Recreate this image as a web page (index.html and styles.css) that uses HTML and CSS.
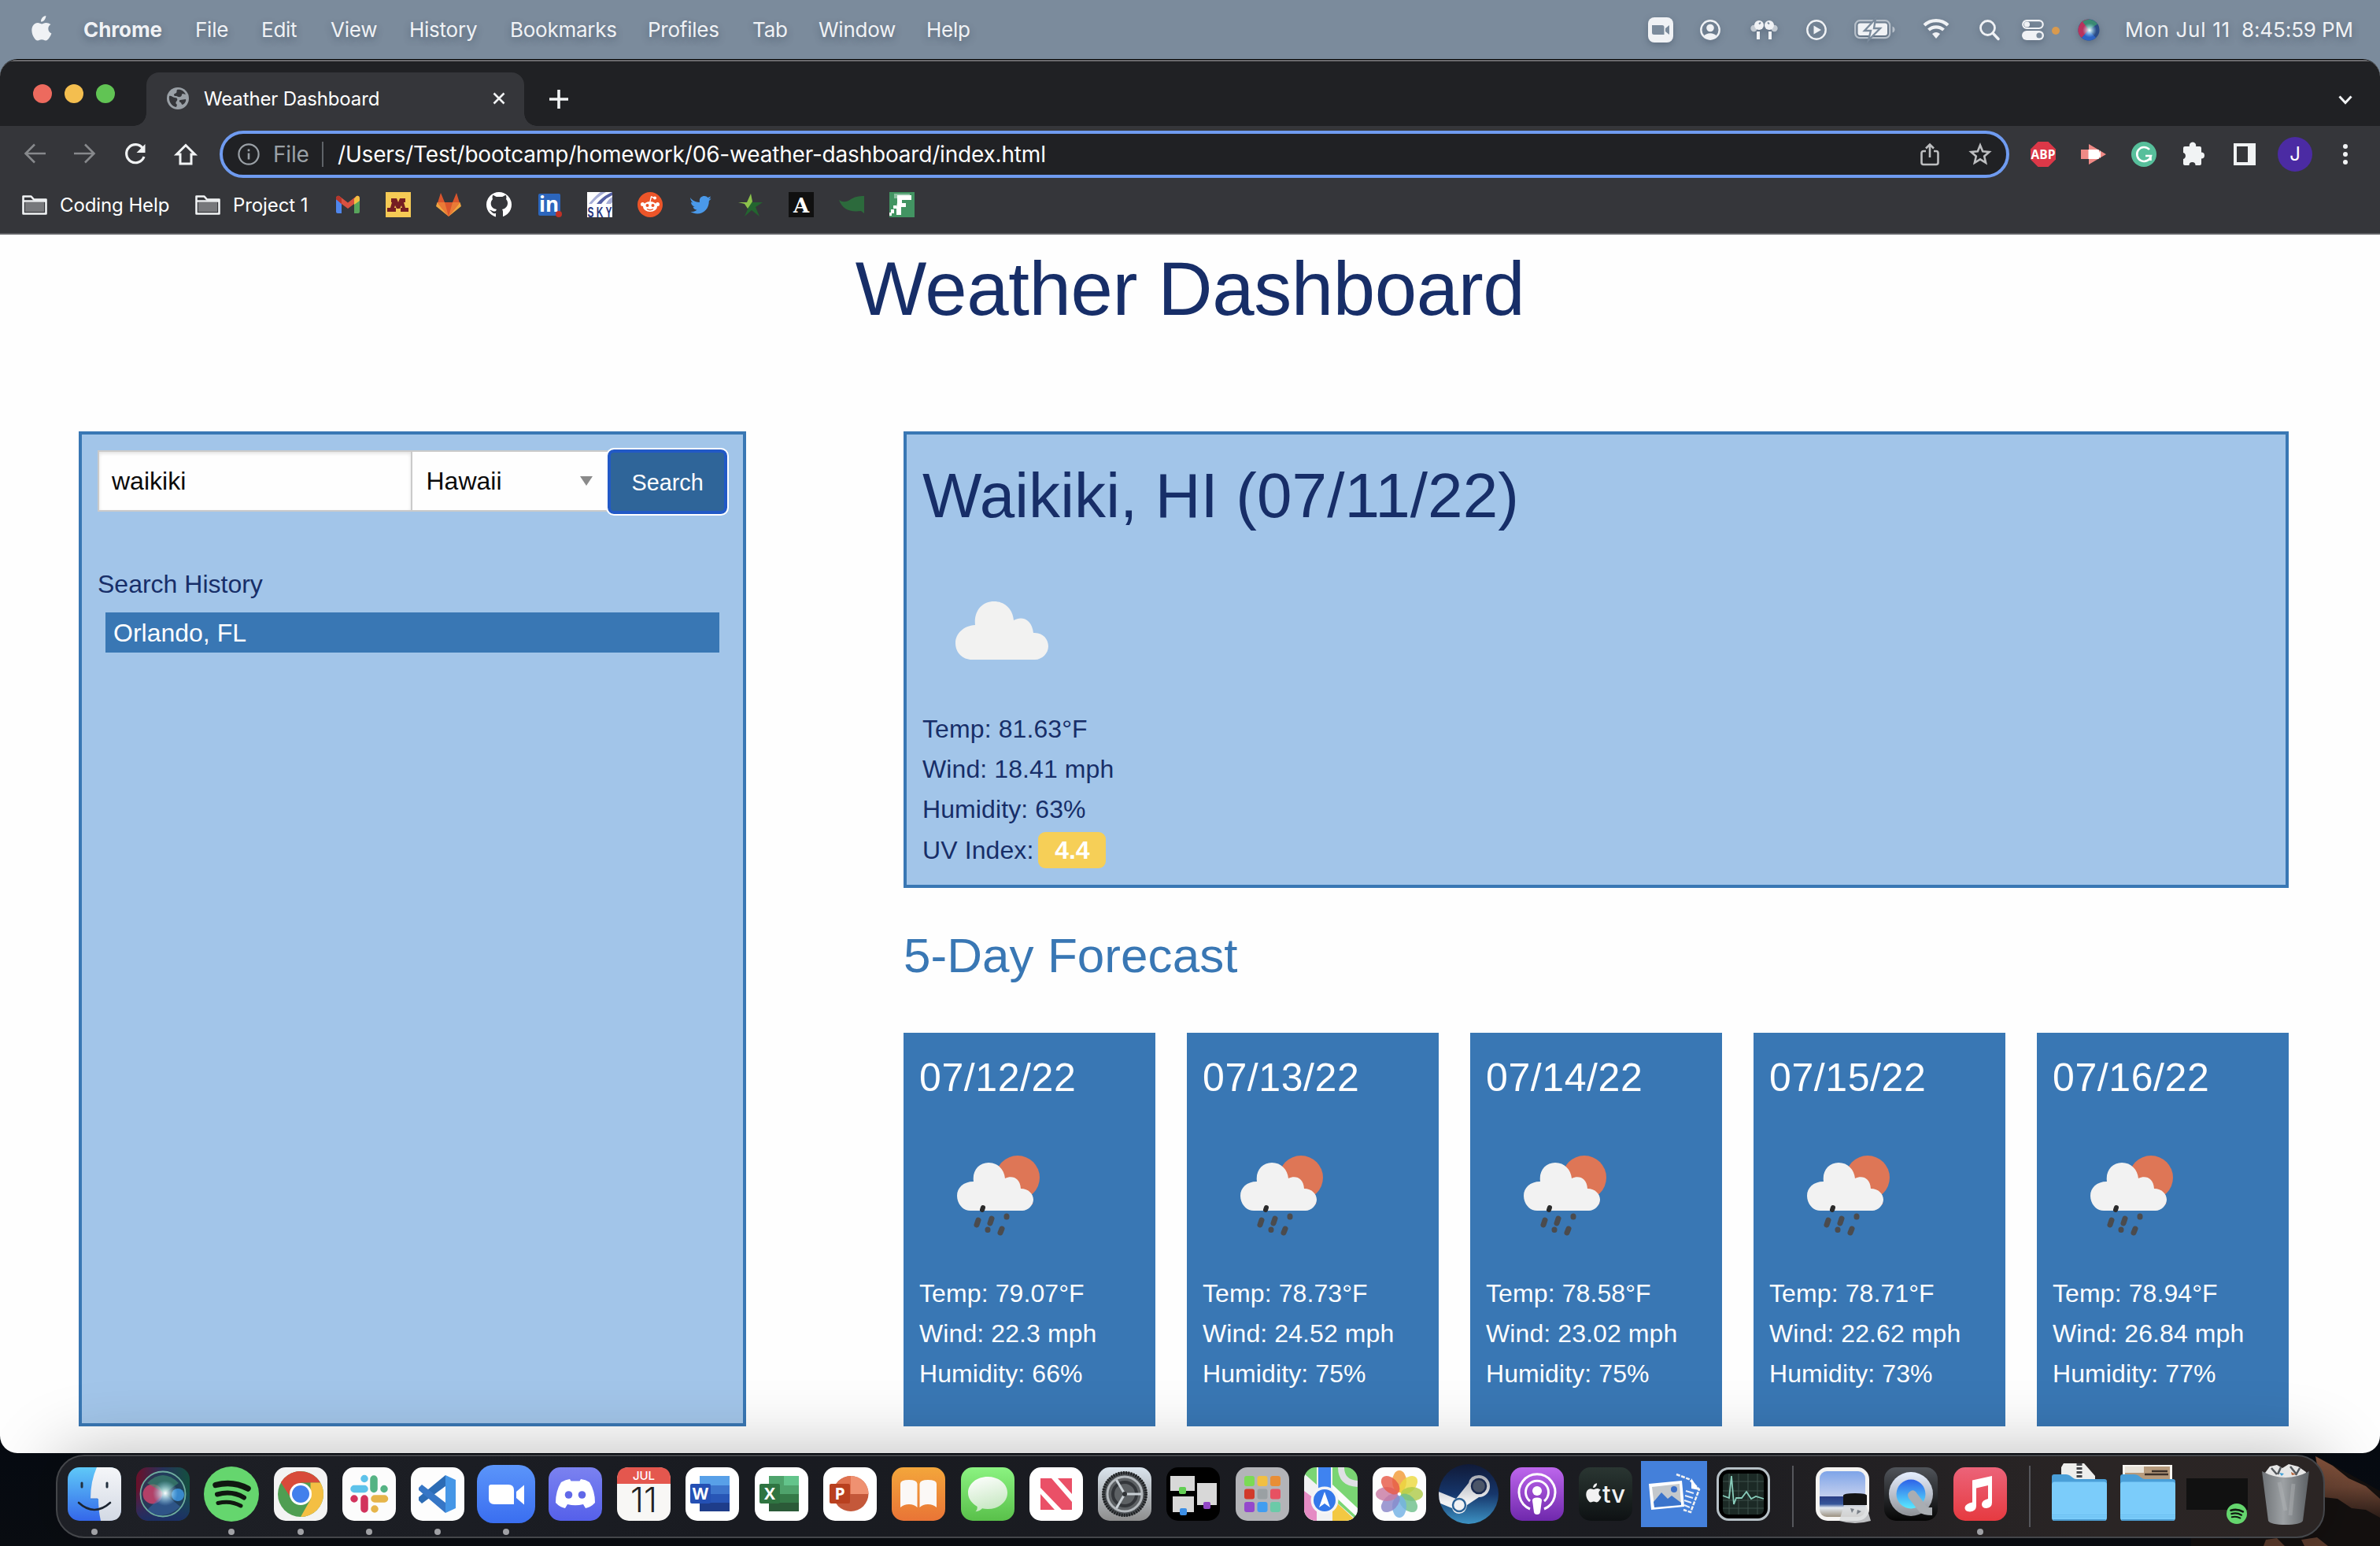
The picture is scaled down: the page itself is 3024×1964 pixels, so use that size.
FILE: index.html
```html
<!DOCTYPE html>
<html lang="en">
<head>
<meta charset="utf-8">
<title>Weather Dashboard</title>
<link rel="stylesheet" href="styles.css">
</head>
<body>
<svg width="0" height="0" class="defs" aria-hidden="true">
  <defs>
    <linearGradient id="g-finder" x1="0" y1="0" x2="0" y2="1"><stop offset="0" stop-color="#5fc9f8"/><stop offset="1" stop-color="#3467ea"/></linearGradient>
    <linearGradient id="g-face" x1="0" y1="0" x2="0" y2="1"><stop offset="0" stop-color="#f5f6f9"/><stop offset="1" stop-color="#d3d9e4"/></linearGradient>
    <linearGradient id="g-zoom" x1="0" y1="0" x2="0" y2="1"><stop offset="0" stop-color="#5b95fa"/><stop offset="1" stop-color="#3a6ef0"/></linearGradient>
    <linearGradient id="g-discord" x1="0" y1="0" x2="0" y2="1"><stop offset="0" stop-color="#7b82f0"/><stop offset="1" stop-color="#5560ea"/></linearGradient>
    <linearGradient id="g-books" x1="0" y1="0" x2="0" y2="1"><stop offset="0" stop-color="#f3a63b"/><stop offset="1" stop-color="#e97436"/></linearGradient>
    <linearGradient id="g-msg" x1="0" y1="0" x2="0" y2="1"><stop offset="0" stop-color="#8bf381"/><stop offset="1" stop-color="#59c04a"/></linearGradient>
    <linearGradient id="g-bubble" x1="0" y1="0" x2=".3" y2="1"><stop offset="0" stop-color="#fff"/><stop offset="1" stop-color="#c9e8c4"/></linearGradient>
    <linearGradient id="g-pref" x1="0" y1="0" x2="0" y2="1"><stop offset="0" stop-color="#dbe5ee"/><stop offset="1" stop-color="#8d8d8d"/></linearGradient>
    <linearGradient id="g-steam" x1="0" y1="0" x2="0" y2="1"><stop offset="0" stop-color="#101a38"/><stop offset=".5" stop-color="#16366b"/><stop offset="1" stop-color="#3d93c4"/></linearGradient>
    <linearGradient id="g-arm" x1="0" y1="0" x2="0" y2="1"><stop offset="0" stop-color="#a8abb2"/><stop offset=".7" stop-color="#f2f2f4"/></linearGradient>
    <linearGradient id="g-pod" x1="0" y1="0" x2="0" y2="1"><stop offset="0" stop-color="#bd66ec"/><stop offset="1" stop-color="#6f28ac"/></linearGradient>
    <linearGradient id="g-tv" x1="0" y1="0" x2="0" y2="1"><stop offset="0" stop-color="#2a3632"/><stop offset="1" stop-color="#0e1113"/></linearGradient>
    <linearGradient id="g-music" x1="0" y1="0" x2="0" y2="1"><stop offset="0" stop-color="#ec6379"/><stop offset="1" stop-color="#e63a40"/></linearGradient>
    <linearGradient id="g-qt" x1="0" y1="0" x2="0" y2="1"><stop offset="0" stop-color="#50545a"/><stop offset="1" stop-color="#050505"/></linearGradient>
    <linearGradient id="g-ring" x1="0" y1="0" x2="0" y2="1"><stop offset="0" stop-color="#e6efff"/><stop offset="1" stop-color="#8e9196"/></linearGradient>
    <linearGradient id="g-lens" x1="0" y1="0" x2="0" y2="1"><stop offset="0" stop-color="#2e62e8"/><stop offset="1" stop-color="#59eaff"/></linearGradient>
    <linearGradient id="g-sky" x1="0" y1="0" x2="0" y2="1"><stop offset="0" stop-color="#7ea4e8"/><stop offset=".55" stop-color="#c3cfee"/><stop offset=".56" stop-color="#2b3f86"/><stop offset=".72" stop-color="#35569a"/><stop offset=".8" stop-color="#e4ebf2"/><stop offset="1" stop-color="#9c9180"/></linearGradient>
    <linearGradient id="g-bin" x1="0" y1="0" x2="1" y2="0"><stop offset="0" stop-color="#6f7377"/><stop offset=".45" stop-color="#9da1a4"/><stop offset="1" stop-color="#5c6064"/></linearGradient>
    <linearGradient id="g-siri" x1="0" y1="0" x2="1" y2="0"><stop offset="0" stop-color="#6b1029"/><stop offset=".5" stop-color="#26315c"/><stop offset="1" stop-color="#14503f"/></linearGradient>
    <linearGradient id="g-siri-low" x1="0" y1="0" x2="0" y2="1"><stop offset=".4" stop-color="#1d3b78" stop-opacity="0"/><stop offset="1" stop-color="#1c2f63"/></linearGradient>
    <radialGradient id="g-flare"><stop offset="0" stop-color="#fff"/><stop offset=".3" stop-color="#dff" stop-opacity=".7"/><stop offset="1" stop-color="#9df" stop-opacity="0"/></radialGradient>
    <linearGradient id="g-rock" x1="0" y1="0" x2="0" y2="1"><stop offset="0" stop-color="#8a573f"/><stop offset=".5" stop-color="#6b4433"/><stop offset="1" stop-color="#2b1d18"/></linearGradient>
    <symbol id="spotify" viewBox="0 0 70 70"><circle cx="35" cy="35" r="35" fill="#65d66e"/><g fill="none" stroke="#101810" stroke-linecap="round"><path d="M15 23.500c15-4 29-2 41 4.500" stroke-width="7.500"/><path d="M17 35.500c12-3.500 24-2 34 4" stroke-width="6"/><path d="M18 46.500c10-2.500 20-1.500 29 3.500" stroke-width="5"/></g></symbol>
    <symbol id="apple" viewBox="0 0 26 32"><path fill="currentColor" d="M18.300 0c.2 2-.6 3.900-1.700 5.200-1.100 1.400-2.900 2.400-4.600 2.300-.2-1.900.7-3.900 1.700-5.100C14.900 1 16.800.1 18.300 0zM24.500 11.100c-2 1.200-3.200 3-3.200 5.400 0 2.800 1.700 5 4.100 5.900-.6 1.900-1.500 3.700-2.700 5.400-1.300 1.900-2.600 3.700-4.700 3.700-2 0-2.600-1.200-5-1.200-2.300 0-3.100 1.200-5 1.300-2 .1-3.500-2-4.800-3.900C.600 24-.9 17.300 1.800 12.800c1.300-2.300 3.700-3.700 6.200-3.700 2 0 3.800 1.300 5 1.300s3.400-1.600 5.800-1.400c1.600.1 4 .6 5.700 2.100z"/></symbol>
    <symbol id="folder" viewBox="0 0 32 26"><path d="M1.500 24.500v-22h10l3.500 4h15.500v18z" fill="none" stroke="#f1f3f4" stroke-width="2.600" stroke-linejoin="round"/><path d="M4 10h24v12H4z" fill="#77787b"/><path d="M2 8.500h28" stroke="#f1f3f4" stroke-width="2.400"/></symbol>
    <symbol id="dock-folder" viewBox="0 0 70 59"><path d="M0 3q0-3 3-3h15q3 0 5 1.500l4 3q2 1.500 5 1.500h35q3 0 3 3v14H0z" fill="#4a9fd8"/><path d="M0 13q0-3.500 3.500-3.500h63Q70 9.500 70 13v42q0 4-4 4H4q-4 0-4-4z" fill="#7bccfa"/><path d="M0 51.500h70M0 54h70" stroke="#6cbff0"/><path d="M1.500 58h67" stroke="#4c9cd0" stroke-width="2"/></symbol>
    <symbol id="cloud" viewBox="0 0 118 74"><path fill="#f2f2f1" d="M21 74C9 74 0 65 0 53S10 31 25 30C23 12 34 0 49 0s24 11 25 24c10-6 23-2 25 16 12-1 19 8 19 17s-8 17-17 17z"/></symbol>
    <symbol id="showers" viewBox="0 0 106 102"><circle cx="77" cy="28" r="28" fill="#de7656"/><path fill="none" stroke="#dc5838" stroke-width="3" d="M60 36c9-4 18 1 19 13 9-1 15 6 16 13"/><path fill="#f2f2f2" d="M17 70C7 70 0 61 0 51s8-18 21-18C19 19 28 9 40 9s20 9 21 20c9-4 19-1 20 13 10 0 16 7 16 14s-7 14-14 14z"/><g stroke="#4b4b4d" stroke-width="7" stroke-linecap="round"><path d="m33 66-1 3" stroke="#2b2b2b" stroke-width="6"/><path d="M27 82l-2 6M44 80l-2 6M63 77v1M39 94v.5M57 93l-2 5"/></g></symbol>
  </defs>
</svg>

<header class="menubar">
  <nav class="menus">
    <svg class="apple-logo"><use href="#apple"/></svg>
    <b class="menu-app">Chrome</b><span class="m-file">File</span><span class="m-edit">Edit</span><span class="m-view">View</span><span class="m-history">History</span><span class="m-bookmarks">Bookmarks</span><span class="m-profiles">Profiles</span><span class="m-tab">Tab</span><span class="m-window">Window</span><span>Help</span>
  </nav>
  <div class="status">
    <svg width="32" height="32" viewBox="0 0 32 32"><rect width="32" height="32" rx="8" fill="#f0f2f5"/><path d="M5 10h13a2.500 2.500 0 0 1 2.500 2.500V22H7.500A2.500 2.500 0 0 1 5 19.500zM22 14l5-4v12l-5-4z" fill="#7b8b9c"/></svg>
    <svg width="26" height="26" viewBox="0 0 26 26" class="st-user"><circle cx="13" cy="13" r="11.700" fill="none" stroke="#f0f2f5" stroke-width="2.400"/><circle cx="13" cy="10.500" r="4.800" fill="#f0f2f5"/><path d="M5 21c3-5 13-5 16 0-4 4.500-12 4.500-16 0z" fill="#f0f2f5"/></svg>
    <svg width="35" height="26" viewBox="0 0 35 26" class="st-pods"><g fill="#c3cad2"><circle cx="4.500" cy="11" r="4.200"/><circle cx="30.500" cy="11" r="4.200"/></g><g fill="#f0f2f5"><circle cx="11" cy="7" r="6"/><circle cx="24" cy="7" r="6"/><path d="M8 15h4v10H8zM23 15h4v10h-4z"/></g><path d="m11 5.500 2-2M24 5.500l-2-2" stroke="#7b8b9c" stroke-width="2"/></svg>
    <svg width="26" height="26" viewBox="0 0 26 26" class="st-play"><circle cx="13" cy="13" r="11.700" fill="none" stroke="#f0f2f5" stroke-width="2.400"/><path d="M9.500 7.500v11l9.500-5.500z" fill="#f0f2f5"/></svg>
    <svg width="52" height="26" viewBox="0 0 52 26" class="st-batt"><rect x="1.200" y="1.200" width="44" height="22" rx="6" fill="none" stroke="#b7c0ca" stroke-width="2.200"/><rect x="4.500" y="4.500" width="37.500" height="15.500" rx="3" fill="#f0f2f5"/><path d="M48.500 8.500v8q3-1 3-4t-3-4z" fill="#b7c0ca"/><path d="M27-1 13 14h8l-3 12 15-15h-8z" fill="#f0f2f5" stroke="#7b8b9c" stroke-width="2.400"/></svg>
    <svg width="34" height="28" viewBox="0 0 34 28" class="st-wifi"><g fill="none" stroke="#f0f2f5" stroke-width="4.200"><path d="M2 10a22 22 0 0 1 30 0"/><path d="M7.500 16a14 14 0 0 1 19 0"/></g><path d="m17 27-5-6q5-4 10 0z" fill="#f0f2f5"/></svg>
    <svg width="26" height="26" viewBox="0 0 26 26" class="st-find"><circle cx="10.500" cy="10.500" r="9" fill="none" stroke="#f0f2f5" stroke-width="2.800"/><path d="m17 17 7 7.500" stroke="#f0f2f5" stroke-width="3.400" stroke-linecap="round"/></svg>
    <svg width="28" height="26" viewBox="0 0 28 26" class="st-ctl"><rect x="1.200" y="1.200" width="25.500" height="9.800" rx="4.900" fill="none" stroke="#f0f2f5" stroke-width="2.200"/><circle cx="6.500" cy="6" r="3.600" fill="#f0f2f5"/><rect y="14" width="28" height="12" rx="6" fill="#f0f2f5"/><circle cx="22" cy="20" r="3.600" fill="#7b8b9c"/></svg>
    <i class="mic-dot"></i>
    <svg width="28" height="28" viewBox="0 0 28 28" class="st-siri"><circle cx="14" cy="14" r="13.500" fill="#2b4c86"/><path d="M14 .500A13.500 13.500 0 0 0 5 24l9-10z" fill="#b9335d"/><path d="M6 3.500a13.500 13.500 0 0 1 19 3L14 14z" fill="#3a8a73"/><path d="M5 24a13.500 13.500 0 0 0 18 0l-9-10z" fill="#2c63c4"/><circle cx="15" cy="14.500" r="9" fill="url(#g-flare)"/></svg>
    <time class="clock"><span class="date">Mon Jul 11</span><span>8:45:59 PM</span></time>
  </div>
</header>

<main class="window">
  <div class="tabstrip">
    <div class="lights"><i class="red"></i><i class="amber"></i><i class="green"></i></div>
    <div class="tab">
      <svg width="28" height="28" viewBox="0 0 28 28"><circle cx="14" cy="14" r="14" fill="#9aa0a6"/><path d="M3 11c3-1 4 2 7 2 4 0 4 3 2 5-1 1-1 3 1 4l-1 3C6 24 2 18 3 11zM13 3c5-1 9 2 11 6l-4-1c-2 1 0 3-3 4-3 1-3-1-5-1s-3 0-3-2c0-1 2-1 3-2s0-3 1-4zM17 16l7-1c1 3-2 6-4 7-2 0-1-3-3-3-2-1-1-3 0-3z" fill="#35363a"/></svg>
      <span class="tab-title">Weather Dashboard</span>
      <svg width="16" height="16" viewBox="0 0 16 16" class="tab-close"><path d="m1.500 1.500 13 13m0-13-13 13" stroke="#f1f3f4" stroke-width="2.600"/></svg>
    </div>
    <svg width="24" height="24" viewBox="0 0 24 24" class="tab-new"><path d="M12 0v24M0 12h24" stroke="#f1f3f4" stroke-width="3.600"/></svg>
    <svg width="18" height="12" viewBox="0 0 18 12" class="tab-more"><path d="m1.500 1.500 7.500 8 7.500-8" fill="none" stroke="#f1f3f4" stroke-width="3"/></svg>
  </div>

  <div class="toolbar">
    <div class="nav-icons">
      <svg width="28" height="26" viewBox="0 0 28 26"><path d="M14 1.500 2.500 13 14 24.500M2.500 13H28" fill="none" stroke="#87898c" stroke-width="2.600"/></svg>
      <svg width="28" height="26" viewBox="0 0 28 26"><path d="M14 1.500 25.500 13 14 24.500M25.500 13H0" fill="none" stroke="#87898c" stroke-width="2.600"/></svg>
      <svg width="28" height="28" viewBox="0 0 28 28"><path d="M23.500 6.500A11.500 11.500 0 1 0 25 17" fill="none" stroke="#f1f3f4" stroke-width="3.200"/><path d="M26.500 1v11h-11z" fill="#f1f3f4"/></svg>
      <svg width="28" height="28" viewBox="0 0 28 28"><path d="M14 2.500 2.500 14H7v12h14V14h4.500z" fill="none" stroke="#f1f3f4" stroke-width="3"/></svg>
    </div>
    <div class="omnibox">
      <svg width="28" height="28" viewBox="0 0 28 28"><circle cx="14" cy="14" r="12.600" fill="none" stroke="#9aa0a6" stroke-width="2.200"/><path d="M14 12.500v8M14 7.500v2.800" stroke="#9aa0a6" stroke-width="2.600"/></svg>
      <span class="scheme">File</span>
      <span class="url">/Users/Test/bootcamp/homework/06-weather-dashboard/index.html</span>
      <svg width="24" height="30" viewBox="0 0 24 30" class="share"><path d="M7 11H4q-2.500 0-2.500 2.500v12Q1.500 28 4 28h16q2.500 0 2.500-2.500v-12Q22.500 11 20 11h-3M12 19V2.500M7 7.500l5-5 5 5" fill="none" stroke="#bdbec0" stroke-width="2.600"/></svg>
      <svg width="30" height="30" viewBox="0 0 30 30"><path d="m15 3.500 3.200 7.800 8.300.7-6.300 5.500 1.900 8.300L15 21.400l-7.100 4.400 1.900-8.300L3.500 12l8.300-.7z" fill="none" stroke="#bdbec0" stroke-width="2.600"/></svg>
    </div>
    <div class="extensions">
      <svg viewBox="0 0 32 32"><path d="M9.500 0h13L32 9.500v13L22.500 32h-13L0 22.500v-13z" fill="#dc3848"/><text x="16" y="21.500" class="abp" text-anchor="middle">ABP</text></svg>
      <svg viewBox="0 0 32 32"><path d="M0 10h10V3l22 13-22 13v-7H0z" fill="#f08a86"/><path d="M9.500 10h13l1 4 1.500-3v10l-1.500-2-1 3h-13z" fill="#fff"/></svg>
      <svg viewBox="0 0 32 32"><circle cx="16" cy="16" r="16" fill="#57bf9b"/><path d="M23 10a9 9 0 1 0 2 8h-7M24.500 24v-6" fill="none" stroke="#fff" stroke-width="2.600"/></svg>
      <svg viewBox="0 0 32 32"><path d="M2 8q0-2 2-2h6a4.200 4.200 0 1 1 8 0h5q2 0 2 2v5.500a4 4 0 1 1 0 8V28q0 2-2 2h-5.500a4 4 0 0 0-8 0H4q-2 0-2-2v-6a4.200 4.200 0 0 0 0-8z" fill="#f1f3f4"/></svg>
      <svg viewBox="0 0 32 32"><path fill-rule="evenodd" d="M2 2h28v28H2zM6 6v20h14V6z" fill="#f1f3f4"/></svg>
      <span class="avatar">J</span>
      <svg viewBox="0 0 32 32"><g fill="#f1f3f4"><circle cx="16" cy="6" r="3"/><circle cx="16" cy="16" r="3"/><circle cx="16" cy="26" r="3"/></g></svg>
    </div>
  </div>

  <div class="bookmarks">
    <svg class="bm-folder"><use href="#folder"/></svg><span class="bm-coding">Coding Help</span>
    <svg class="bm-folder"><use href="#folder"/></svg><span class="bm-project">Project 1</span>
    <div class="bm-icons">
      <svg viewBox="0 0 32 32"><path d="M1 9v16q0 2 2 2h5V13z" fill="#4f86ec"/><path d="M31 9v16q0 2-2 2h-5V13z" fill="#58a55c"/><path d="M1 9q0-5 4-4l11 8.500L27 5q4-1 4 4l-7 6-8 6-8-6z" fill="#d95140"/><path d="M24 8.500 27 5q4-1 4 4v2l-7 5z" fill="#f2bf42"/><path d="M1 9q0-5 4-4l3 3v7z" fill="#b5362b"/></svg>
      <svg viewBox="0 0 32 32"><path d="M0 0h32v32H0z" fill="#f5ca55"/><path d="M7 8h7l2 5 2-5h7v5h-2l2 7h4v5H19v-5h2l-1-3-2 4h-4l-2-4-1 3h2v5H2v-5h4l2-7H7z" fill="#761e22"/></svg>
      <svg viewBox="0 0 32 32"><path d="M6 1 1 17l15 14 15-14L26 1l-5 12H11z" fill="#d9552d"/><path d="M0 18l1.500-5L16 31z" fill="#f0a641"/><path d="M32 18l-1.500-5L16 31z" fill="#f0a641"/><path d="M1.500 13H11l5 18zM30.500 13H21l-5 18z" fill="#ea7a36"/></svg>
      <svg viewBox="0 0 32 32"><circle cx="16" cy="16" r="16" fill="#fff"/><path d="M12 32v-5c-5 1-5-3-8-4 2-1 4 3 8 1l1-2c-8-1-9-9-5-13-1-2 0-4 0-5 2 0 4 2 5 2h7c1 0 3-2 5-2 0 1 1 3 0 5 4 4 2 12-5 13 1 1 1 3 1 4v6z" fill="#35363a"/></svg>
      <svg viewBox="0 0 32 32"><rect x="2" y="2" width="28" height="28" rx="2" fill="#2c66bc"/><text x="15.500" y="25" class="li" text-anchor="middle">in</text><circle cx="28" cy="28" r="4" fill="#bf3127"/></svg>
      <svg viewBox="0 0 32 32"><path d="M0 0h32v32H0z" fill="#fff"/><path d="M2 15Q10 5 17 0h7Q13 6 6 15zM24 15q2-5 8-9v7l-2 2z" fill="#a7aed6"/><path d="M12 15Q20 5 32 0v4q-9 4-14 11z" fill="#5560a4"/><text x="0.500" y="31.500" class="sky" textLength="31" lengthAdjust="spacingAndGlyphs">S K Y</text></svg>
      <svg viewBox="0 0 32 32"><circle cx="16" cy="16" r="16" fill="#ec5529"/><ellipse cx="16" cy="18.500" rx="9" ry="6.500" fill="#fff"/><circle cx="6.500" cy="15.500" r="2.500" fill="#fff"/><circle cx="25.500" cy="15.500" r="2.500" fill="#fff"/><circle cx="22" cy="7.500" r="2" fill="#fff"/><path d="m16 12 1.500-6 4.500 1.500" fill="none" stroke="#fff" stroke-width="1.400"/><circle cx="12.500" cy="17" r="2" fill="#ec5529"/><circle cx="19.500" cy="17" r="2" fill="#ec5529"/><path d="M12 21.500q4 2.500 8 0" fill="none" stroke="#ec5529" stroke-width="1.400"/></svg>
      <svg viewBox="0 0 32 32"><path d="M3 7c3 4 7 6 12 6-1-5 2-8 6-8 2 0 3 .700 4.500 2L29 5.500c-.5 1.500-1 2.500-2.500 3.500l3-.7c-.7 1.300-1.500 2-2.700 3C27 20 21 27.500 12 27.500c-3 0-6-1-8.500-2.500 3 .300 5.500-.5 8-2.300-2.500-.2-4.500-1.700-5-4l2.300-.1C6 18 4 15.500 4 12.800l2.500.7C4 11.700 3.400 9 3 7z" fill="#4a99e9"/></svg>
      <svg viewBox="0 0 32 32"><path d="m16 2 2 11H31l-9 6 5 12-10-8-9 8 6-14z" fill="#23652f"/><path d="m16 2 2 10-6 9-4-6-8-2h11z" fill="#8dc24c"/></svg>
      <svg viewBox="0 0 32 32"><path d="M0 0h32v32H0z" fill="#101010"/><text x="16" y="26" class="slab" text-anchor="middle">A</text></svg>
      <svg viewBox="0 0 32 32"><path d="M0 10q5 4 12 1 9-7 20-6v22l-4-3Q6 27 0 10z" fill="#2c6a3c"/></svg>
      <svg viewBox="0 0 32 32"><path d="M0 0h32v32H0z" fill="#429462"/><path d="M6 2h20v2H10v4H6z" fill="#8ac0a0"/><path d="M10 4h18v6H16v4h5v5h-6v10H9V19l1-5zM5 17h4v4H5zM2 22h4v5H2zM0 26h3v4H0z" fill="#fff"/></svg>
    </div>
  </div>

  <section class="page">
    <h1>Weather Dashboard</h1>
    <div class="columns">
      <aside class="search-panel">
        <form class="search-row">
          <div class="city">waikiki</div>
          <div class="state"><span>Hawaii</span><i class="caret"></i></div>
          <div class="go">Search</div>
        </form>
        <p class="history-label">Search History</p>
        <div class="history-item">Orlando, FL</div>
      </aside>
      <div class="results">
        <article class="today">
          <h2>Waikiki, HI (07/11/22)</h2>
          <svg class="today-icon"><use href="#cloud"/></svg>
          <p>Temp: 81.63°F</p>
          <p>Wind: 18.41 mph</p>
          <p>Humidity: 63%</p>
          <p>UV Index: <b class="uv">4.4</b></p>
        </article>
        <h3>5-Day Forecast</h3>
        <div class="forecast">
          <article class="day"><h4>07/12/22</h4><svg><use href="#showers"/></svg><p>Temp: 79.07°F</p><p>Wind: 22.3 mph</p><p>Humidity: 66%</p></article>
          <article class="day"><h4>07/13/22</h4><svg><use href="#showers"/></svg><p>Temp: 78.73°F</p><p>Wind: 24.52 mph</p><p>Humidity: 75%</p></article>
          <article class="day"><h4>07/14/22</h4><svg><use href="#showers"/></svg><p>Temp: 78.58°F</p><p>Wind: 23.02 mph</p><p>Humidity: 75%</p></article>
          <article class="day"><h4>07/15/22</h4><svg><use href="#showers"/></svg><p>Temp: 78.71°F</p><p>Wind: 22.62 mph</p><p>Humidity: 73%</p></article>
          <article class="day"><h4>07/16/22</h4><svg><use href="#showers"/></svg><p>Temp: 78.94°F</p><p>Wind: 26.84 mph</p><p>Humidity: 77%</p></article>
        </div>
      </div>
    </div>
  </section>
</main>

<svg class="rocks" viewBox="0 0 240 120"><path d="M0 120V108L60 112 140 60 160 6 240 50v70z" fill="#14100f"/><path d="M158 6 180 18 200 34 222 44 240 60V84L222 74 204 72 186 60 168 58z" fill="url(#g-rock)"/><path d="M95 112l14-2 10 10H92zM140 112l20-3 14 11h-30z" fill="#5d3c2d"/></svg>

<footer class="dock">
  <div class="app running"><svg viewBox="0 0 68 68"><rect width="68" height="68" rx="15" fill="url(#g-finder)"/><path d="M37 0h16q15 0 15 15v38q0 15-15 15H42q-3-13-3-28H29Q29 18 37 0z" fill="url(#g-face)"/><path d="M29 40h9" stroke="#3a76d6"/><path d="M18 20v5M50 20v5" stroke="#22303f" stroke-width="3" stroke-linecap="round"/><path d="M14 45q20 18 40 0" fill="none" stroke="#1b2430" stroke-width="2.600" stroke-linecap="round"/></svg></div>
  <div class="app"><svg viewBox="0 0 68 68"><rect width="68" height="68" rx="15" fill="url(#g-siri)"/><rect width="68" height="68" rx="15" fill="url(#g-siri-low)"/><circle cx="34" cy="34" r="28.500" fill="#22405c" fill-opacity=".7" stroke="#6fae9f" stroke-width="1.800"/><circle cx="21" cy="34" r="12.500" fill="#e0446e" fill-opacity=".75"/><circle cx="53" cy="35" r="8" fill="#3f9ae8" fill-opacity=".8"/><path d="M14 20Q34 0 54 20L36 33z" fill="#3f8f70" fill-opacity=".6"/><path d="M14 54q20 16 42-4L36 33z" fill="#3b6cb0" fill-opacity=".5"/><circle cx="37" cy="33" r="16" fill="url(#g-flare)"/></svg></div>
  <div class="app running"><svg class="w70"><use href="#spotify"/></svg></div>
  <div class="app running"><svg viewBox="0 0 68 68"><rect width="68" height="68" rx="15" fill="#f3f3f3"/><circle cx="34" cy="34" r="29" fill="#4f9e52"/><path d="M34 34 9 19.500A29 29 0 0 1 59 19.500H34z" fill="#d84b3a"/><path d="M59.100 19.500A29 29 0 0 1 34 63l12.500-22V19.500z" fill="#f4bf43"/><path d="M9 19.500A29 29 0 0 1 34 5v20L21 38z" fill="#d84b3a"/><circle cx="34" cy="34" r="14" fill="#fff"/><circle cx="34" cy="34" r="11" fill="#4280ec"/></svg></div>
  <div class="app running"><svg viewBox="0 0 68 68"><rect width="68" height="68" rx="15" fill="#fcfcfc"/><g stroke-width="9.500" stroke-linecap="round"><path d="M15 27.500h13M28 14.500v0" stroke="#5dc2ea"/><path d="M40 15v12.500M53 27.500v0" stroke="#55b384"/><path d="M28 40v13M15 40v0" stroke="#d2335d"/><path d="M41 40h12.500M41 53v0" stroke="#e6b54a"/></g></svg></div>
  <div class="app running"><svg viewBox="0 0 68 68"><rect width="68" height="68" rx="15" fill="#fdfdfd"/><path d="M44 10v14L14 46l-4-4v-4z" fill="#2c6cb5"/><path d="M10 26l4-4 30 23v13L10 29z" fill="#3676c6"/><path d="m44 10 13 6v36l-13 6z" fill="#4596e6"/></svg></div>
  <div class="app running"><svg class="w74" viewBox="0 0 74 74"><rect width="74" height="74" rx="21" fill="url(#g-zoom)"/><path d="M18 25h22q7 0 7 7v18H22q-7 0-7-7V28q0-3 3-3zM50 34l10-8.500v25L50 42z" fill="#fff"/></svg></div>
  <div class="app"><svg viewBox="0 0 68 68"><rect width="68" height="68" rx="15" fill="url(#g-discord)"/><path d="M16 19q6-3.500 11-4l1.500 2.500h11L41 15q6 .5 11 4 7 11 7 26-5 5.500-12 7l-3-5q-10 2.500-20 0l-3 5q-7-1.500-12-7 0-15 7-26z" fill="#fff"/><circle cx="25.500" cy="35" r="4.800" fill="#6068e8"/><circle cx="42.500" cy="35" r="4.800" fill="#6068e8"/></svg></div>
  <div class="app"><svg viewBox="0 0 68 68"><rect width="68" height="68" rx="15" fill="#f8f7f5"/><path d="M0 21v-6Q0 0 15 0h38q15 0 15 15v6z" fill="#e4574e"/><text x="34" y="16" class="cal-month" text-anchor="middle">JUL</text><text x="34" y="57" class="cal-day" text-anchor="middle">11</text></svg></div>
  <div class="app"><svg viewBox="0 0 68 68"><rect width="68" height="68" rx="15" fill="#fff"/><path d="M18 11h38v12H18z" fill="#58a0e8"/><path d="M18 23h38v11H18z" fill="#3d75cc"/><path d="M18 34h38v11H18z" fill="#2856b6"/><path d="M18 45h38v11H18z" fill="#1e3d8a"/><rect x="6" y="21" width="26" height="25" rx="2" fill="#2450b4"/><text x="19" y="41" class="office" text-anchor="middle">W</text></svg></div>
  <div class="app"><svg viewBox="0 0 68 68"><rect width="68" height="68" rx="15" fill="#fff"/><path d="M18 11h38v45H18z" fill="#4fa36c"/><path d="M37 11h19v12H37z" fill="#63c48b"/><path d="M18 34h38v11H18z" fill="#357a48"/><path d="M18 45h38v11H18z" fill="#2b5a38"/><rect x="6" y="21" width="26" height="25" rx="2" fill="#2f7441"/><text x="19" y="41" class="office" text-anchor="middle">X</text></svg></div>
  <div class="app"><svg viewBox="0 0 68 68"><rect width="68" height="68" rx="15" fill="#fff"/><circle cx="35" cy="33.500" r="22.500" fill="#c4583a"/><path d="M35 34V11a22.500 22.500 0 0 1 22.500 23z" fill="#ef9171"/><path d="M35 34V11a22.500 22.500 0 0 0-22 23z" fill="#df7250"/><rect x="8" y="21" width="26" height="25" rx="2" fill="#b9401f"/><text x="21" y="41" class="office" text-anchor="middle">P</text></svg></div>
  <div class="app"><svg viewBox="0 0 68 68"><rect width="68" height="68" rx="15" fill="url(#g-books)"/><path d="M11 51V21q0-5 11-5 10 0 10.500 5v30q-4-4-10.500-4t-11 4zM57 51V21q0-5-11-5-10 0-10.500 5v30q4-4 10.500-4t11 4z" fill="#fbf8f6"/></svg></div>
  <div class="app"><svg viewBox="0 0 68 68"><rect width="68" height="68" rx="15" fill="url(#g-msg)"/><path d="M34 12c14 0 25 9 25 20.500S48 53 34 53q-4 0-7-.8-3 3.500-8.500 4 3-3 2-6.500C14 46 9 40 9 32.500 9 21 20 12 34 12z" fill="url(#g-bubble)"/></svg></div>
  <div class="app"><svg viewBox="0 0 68 68"><rect width="68" height="68" rx="15" fill="#fff"/><path d="M14 14h14l26 30v10H41L14 26z" fill="#ea5067"/><path d="M36 14h18v20zM14 34l18 20H14z" fill="#ea5067"/></svg></div>
  <div class="app"><svg viewBox="0 0 68 68"><rect width="68" height="68" rx="15" fill="url(#g-pref)"/><circle cx="34" cy="34" r="28.500" fill="#4b4f53"/><circle cx="34" cy="34" r="27" fill="none" stroke="#1e2022" stroke-width="4" stroke-dasharray="1.800 1.400"/><circle cx="34" cy="34" r="22" fill="#5d6164" stroke="#b4b9bd" stroke-width="3"/><circle cx="34" cy="34" r="15" fill="none" stroke="#33363a" stroke-width="4"/><path d="M34 34h21M34 34 23.500 16M34 34 23.500 52" stroke="#c9d0d5" stroke-width="3"/><circle cx="34" cy="34" r="3" fill="#303336"/></svg></div>
  <div class="app"><svg viewBox="0 0 68 68"><rect width="68" height="68" rx="15" fill="#000"/><path d="M5 11h31v19H5zM8 37h27v20H8zM39 20h25v28H39z" fill="#d8d8d8"/><rect x="16" y="25" width="9" height="9" rx="2" fill="#63cf54"/><rect x="17" y="52" width="9" height="9" rx="2" fill="#3d8fe6"/><rect x="47" y="44" width="9" height="9" rx="2" fill="#9247c6"/></svg></div>
  <div class="app"><svg viewBox="0 0 68 68"><rect width="68" height="68" rx="15" fill="#b3b4b8"/><g><rect x="11" y="11" width="13" height="13" rx="3" fill="#7bdb55"/><rect x="27.500" y="11" width="13" height="13" rx="3" fill="#f1bf42"/><rect x="44" y="11" width="13" height="13" rx="3" fill="#e88e36"/><rect x="11" y="27.500" width="13" height="13" rx="3" fill="#d13a2a"/><rect x="27.500" y="27.500" width="13" height="13" rx="3" fill="#9aa0a3"/><rect x="44" y="27.500" width="13" height="13" rx="3" fill="#e75162"/><rect x="11" y="44" width="13" height="13" rx="3" fill="#9448cc"/><rect x="27.500" y="44" width="13" height="13" rx="3" fill="#419df0"/><rect x="44" y="44" width="13" height="13" rx="3" fill="#6bcaa8"/></g></svg></div>
  <div class="app"><svg viewBox="0 0 68 68"><clipPath id="sq"><rect width="68" height="68" rx="15"/></clipPath><g clip-path="url(#sq)"><path d="M0 0h68v68H0z" fill="#7ad573"/><path d="M0 8 68 68H0z" fill="#f1f1f3"/><path d="M0 30l16 12v26H0z" fill="#e58bc4"/><path d="M36 40 66 68H36z" fill="#f3c843"/><path d="M16 0h20v68H16z" fill="#f1f1f3"/><path d="M18 0h16v36H18z" fill="#3f83f0"/><path d="M47 0q0 20 21 21" fill="none" stroke="#dfe0e4" stroke-width="8"/><path d="M36 22 68 52v12L36 34z" fill="#fbfbfc"/></g><circle cx="26" cy="42" r="17.500" fill="#f4f4f6"/><circle cx="26" cy="42" r="14" fill="#3478ea"/><path d="m26 31 7 20-7-5-7 5z" fill="#fff"/></svg></div>
  <div class="app"><svg viewBox="0 0 68 68"><rect width="68" height="68" rx="15" fill="#fdfdfd"/><g fill-opacity=".82"><ellipse cx="34" cy="18" rx="9" ry="14" fill="#f29b38"/><ellipse cx="34" cy="18" rx="9" ry="14" fill="#ecd93f" transform="rotate(45 34 34)"/><ellipse cx="34" cy="18" rx="9" ry="14" fill="#aecb4a" transform="rotate(90 34 34)"/><ellipse cx="34" cy="18" rx="9" ry="14" fill="#6fbf8b" transform="rotate(135 34 34)"/><ellipse cx="34" cy="18" rx="9" ry="14" fill="#73b1e4" transform="rotate(180 34 34)"/><ellipse cx="34" cy="18" rx="9" ry="14" fill="#8a86c8" transform="rotate(225 34 34)"/><ellipse cx="34" cy="18" rx="9" ry="14" fill="#c87aa4" transform="rotate(270 34 34)"/><ellipse cx="34" cy="18" rx="9" ry="14" fill="#e75a48" transform="rotate(315 34 34)"/></g></svg></div>
  <div class="app"><svg class="w76" viewBox="0 0 76 76"><clipPath id="disc"><circle cx="38" cy="38" r="38"/></clipPath><g clip-path="url(#disc)"><path d="M0 0h76v76H0z" fill="url(#g-steam)"/><path d="M0 35 22 44 38 24q2-10 13-10a14 14 0 0 1 0 28L36 52q-1 10-10 11-7 0-9-7L0 49z" fill="url(#g-arm)"/></g><circle cx="51" cy="28" r="9" fill="#4b5568" stroke="#1a2a50" stroke-width="2.500"/><circle cx="26" cy="52" r="8" fill="none" stroke="#2d6296" stroke-width="2.500"/></svg></div>
  <div class="app"><svg viewBox="0 0 68 68"><rect width="68" height="68" rx="15" fill="url(#g-pod)"/><g fill="none" stroke="#fff" stroke-width="3"><path d="M25 53a23 23 0 1 1 18 0"/><path d="M25 43a14.500 14.500 0 1 1 18 0"/></g><circle cx="34" cy="30" r="6" fill="#fff"/><path d="M28 42q0-3.500 6-3.500t6 3.500l-2 15q-.5 3-4 3t-4-3z" fill="#fff"/></svg></div>
  <div class="app"><svg viewBox="0 0 68 68"><rect width="68" height="68" rx="15" fill="url(#g-tv)"/><svg x="9" y="20" width="20" height="25" class="tv-apple"><use href="#apple"/></svg><text x="30" y="45" class="tv">tv</text></svg></div>
  <div class="app"><svg class="w84" viewBox="0 0 84 84"><path d="M0 0h84v84H0z" fill="#4480da"/><path d="m45 17 16 6 13 13-11 29-9-3" fill="#4480da" stroke="#f2f2f2" stroke-width="2.500" stroke-dasharray="5 1.500"/><path d="m64 22 10 15-10-2z" fill="#fff"/><path d="m57 38 10 3M56 44l10 3M55 50l9 3M55 56l7 3" stroke="#e9eef8" stroke-width="2"/><path d="m10 29 42-4 3 33-42 4z" fill="#fff"/><path d="m14 33 35-4 2 26-34 3z" fill="#c3c8cc"/><circle cx="42" cy="36" r="4" fill="#3a6fc8"/><path d="m16 52 10-12 8 8 5-4 12 9v3l-34 3z" fill="#3a74cc"/></svg></div>
  <div class="app"><svg viewBox="0 0 68 68"><rect x="1.500" y="1.500" width="65" height="65" rx="14" fill="#000" stroke="#b6c0c6" stroke-width="3"/><rect x="8" y="8" width="52" height="52" rx="6" fill="#1c2a26"/><path d="M8 18h52M8 30h52M8 42h52M8 52h52M16 8v52M28 8v52M40 8v52M52 8v52" stroke="#3d504a"/><path d="M8 36l8 3 3-28 3 36 3-8h7l6-8 6 9 6-3 10 3" fill="none" stroke="#88cdbb" stroke-width="1.800"/></svg></div>
  <i class="divider"></i>
  <div class="app"><svg viewBox="0 0 68 68"><rect width="68" height="68" rx="15" fill="#f5f4f2"/><rect x="5" y="5" width="58" height="58" rx="9" fill="url(#g-sky)"/><path d="M35 36q0-3 15-3t15 3v12H35z" fill="#141414"/><path d="M36 48h28l6 20q-20 6-40 0z" fill="#d9dcde" fill-opacity=".85"/><path d="m44 52 5 1-3 5zM53 54l5 2-6 4z" fill="#7a8088"/></svg></div>
  <div class="app"><svg viewBox="0 0 68 68"><rect width="68" height="68" rx="15" fill="url(#g-qt)"/><circle cx="34" cy="34" r="28" fill="url(#g-ring)"/><circle cx="34" cy="34" r="18.500" fill="url(#g-lens)"/><path d="M34 30q-6 3-3 9l14 18q4 4 16 4V51h-6L40 31q-3-3-6-1z" fill="#a9adb2"/></svg></div>
  <div class="app running"><svg viewBox="0 0 68 68"><rect width="68" height="68" rx="15" fill="url(#g-music)"/><path d="M24 16.500 49 11v34q0 6-7 7-6 0-6-5 0-5 8-7V23l-15 3.500V49q0 7-8 7.500-7-.5-6.500-5.500 1-5 9.500-6.500z" fill="#fff"/></svg></div>
  <i class="divider"></i>
  <div class="app"><svg class="wf" viewBox="0 0 70 73"><path d="M12 5 15 0h26l14 16v10H12z" fill="#eeeeec"/><path d="M35 0v22" stroke="#44464a" stroke-width="7" stroke-dasharray="3 2"/><use href="#dock-folder" y="14" width="70" height="59"/></svg></div>
  <div class="app"><svg class="wf" viewBox="0 0 70 73"><path d="M3 2h63v22H3z" fill="#f7f5f0"/><path d="M6 4h57v18H6z" fill="#b69a7c"/><path d="M6 4h24v8H6z" fill="#e8e2d8"/><path d="M31 14h30M40 10h20" stroke="#3d3028" stroke-width="2.400"/><use href="#dock-folder" y="14" width="70" height="59"/></svg></div>
  <div class="app"><svg class="w78" viewBox="0 0 78 58"><path d="M0 0h78v40H0z" fill="#111"/><use href="#spotify" x="51" y="32" width="26" height="26"/></svg></div>
  <div class="app"><svg class="wt" viewBox="0 0 60 78"><path d="M4 12 10 4l9-2 7 4 8-5 12 3 10 7v8H4z" fill="#e6e6e6"/><path d="m12 6 7 8M24 5l-4 9M36 4l8 10M48 6l-5 9" stroke="#54585c" stroke-width="2.500"/><path d="m22 12 6 1-3 3z" fill="#3fa0d8"/><path d="m37 11 6 3-5 1z" fill="#b5663c"/><path d="M0 10q30 16 60 0l-8 63q-3 5-22 5T8 73z" fill="url(#g-bin)"/><path d="M22 24 30 60M40 26l-4 40" stroke="#b4b7b9" stroke-opacity=".4" stroke-width="5"/></svg></div>
</footer>
</body>
</html>
```
FILE: styles.css
```css
* { box-sizing: border-box; }

body {
  margin: 0;
  width: 3024px;
  height: 1964px;
  overflow: hidden;
  display: flex;
  flex-direction: column;
  position: relative;
  background: linear-gradient(#7b8b9c 0, #7b8b9c 120px, #04060a 1700px, #070b12 1860px, #0a0d12 1964px);
  font-family: Inter, "Liberation Sans", sans-serif;
}

svg { display: block; flex: none; overflow: visible; }
.defs { position: absolute; }
p, h1, h2, h3, h4 { margin: 0; font-weight: 400; }

/* macOS menu bar */
.menubar {
  height: 75px;
  flex: none;
  display: flex;
  justify-content: space-between;
  padding: 0 34px 0 40px;
  color: #f0f2f5;
  font-size: 26px;
  line-height: 74px;
  text-shadow: 0 4px 10px rgba(40, 55, 75, .45);
}
.menus { display: flex; align-items: center; }
.menus span { letter-spacing: -.25px; white-space: nowrap; }
.apple-logo { width: 26px; height: 32px; margin: 0 40px 4px 0; }
.menu-app { width: 142px; font-weight: 700; letter-spacing: -.1px; }
.m-file { width: 84px; }
.m-edit { width: 88px; }
.m-view { width: 100px; }
.m-history { width: 128px; }
.m-bookmarks { width: 175px; }
.m-profiles { width: 133px; }
.m-tab { width: 84px; }
.m-window { width: 137px; }
.status { display: flex; align-items: center; }
.status svg { filter: drop-shadow(0 3px 4px rgba(40, 55, 75, .35)); }
.st-user { margin-left: 34px; }
.st-pods { margin-left: 38px; }
.st-play { margin-left: 36px; }
.st-batt { margin-left: 35px; }
.st-wifi { margin: 0 0 4px 35px; }
.st-find { margin-left: 38px; }
.st-ctl { margin-left: 28px; }
.mic-dot { width: 10px; height: 10px; border-radius: 50%; background: #d99a4e; margin: 3px 0 0 10px; }
.st-siri { margin-left: 23px; }
.clock { width: 290px; margin-left: 32px; display: flex; justify-content: space-between; letter-spacing: -.1px; white-space: nowrap; }
.date { letter-spacing: .7px; }

/* Browser window */
.window {
  width: 3024px;
  height: 1771px;
  flex: none;
  display: flex;
  flex-direction: column;
  overflow: hidden;
  border-radius: 22px;
  border-top: 1px solid #000;
  background: #fefefe;
}
.tabstrip {
  height: 84px;
  flex: none;
  display: flex;
  background: #202124;
  box-shadow: inset 0 2px #6a6a6d;
}
.lights { width: 186px; flex: none; padding: 31px 0 0 42px; display: flex; gap: 16px; }
.lights i { width: 24px; height: 24px; border-radius: 50%; }
.red { background: #ed6a5e; }
.amber { background: #f4be4f; }
.green { background: #61c454; }
.tab {
  width: 480px;
  height: 68px;
  margin-top: 16px;
  padding: 0 24px 2px 26px;
  display: flex;
  align-items: center;
  background: #35363a;
  border-radius: 16px 16px 0 0;
  position: relative;
}
.tab::before, .tab::after {
  content: "";
  position: absolute;
  bottom: 0;
  width: 16px;
  height: 16px;
}
.tab::before { left: -16px; background: radial-gradient(circle at 0 0, transparent 15.500px, #35363a 16px); }
.tab::after { right: -16px; background: radial-gradient(circle at 100% 0, transparent 15.500px, #35363a 16px); }
.tab-title { margin-left: 19px; flex: 1; font-size: 24px; color: #fff; letter-spacing: -.15px; }
.tab-new { margin: 38px 0 0 32px; }
.tab-more { margin: 45px 35px 0 auto; }

.toolbar { height: 72px; flex: none; display: flex; align-items: center; background: #35363a; padding-left: 30px; }
.nav-icons { display: flex; gap: 36px; width: 249px; flex: none; }
.omnibox {
  width: 2274px;
  height: 60px;
  flex: none;
  display: flex;
  align-items: center;
  padding: 0 18px 0 19px;
  border: 4px solid #6f9bf0;
  border-radius: 30px;
  background: #202124;
  font-size: 28px;
}
.scheme { margin-left: 17px; width: 64px; height: 32px; line-height: 32px; color: #9aa0a6; border-right: 2px solid #5f6368; letter-spacing: -.2px; }
.url { margin-left: 18px; flex: 1; color: #fff; letter-spacing: -.19px; }
.share { margin-right: 37px; }
.extensions { display: flex; align-items: center; gap: 32px; margin-left: 27px; }
.extensions svg { width: 32px; height: 32px; }
.avatar { width: 44px; height: 44px; margin: 0 -6px; border-radius: 50%; background: #4b2ba3; color: #fff; font-size: 24px; line-height: 44px; text-align: center; }
.abp { font: 700 15.500px "Open Sans", sans-serif; fill: #fff; }
.li { font: 700 26px "Open Sans", sans-serif; fill: #fff; }
.sky { font: 700 19px "Liberation Sans", sans-serif; fill: #27357c; }
.slab { font: 700 26px "DejaVu Serif", serif; fill: #fff; }

.bookmarks {
  height: 66px;
  flex: none;
  display: flex;
  align-items: center;
  padding: 0 0 8px 28px;
  background: #35363a;
  border-bottom: 2px solid #5f6064;
  color: #fff;
  font-size: 24px;
}
.bm-folder { width: 32px; height: 26px; }
.bm-coding { margin-left: 16px; width: 172px; letter-spacing: -.1px; }
.bm-project { margin-left: 16px; width: 130px; letter-spacing: -.1px; }
.bm-icons { display: flex; gap: 32px; }
.bm-icons svg { width: 32px; height: 32px; }

/* Weather page */
.page { height: 1547px; font-family: "Liberation Sans", Arial, sans-serif; font-size: 32px; line-height: 51.200px; color: #172e68; }
h1 { height: 250px; font-size: 96px; line-height: 137px; text-align: center; letter-spacing: -.4px; }
.columns { display: flex; gap: 200px; height: 1264px; padding: 0 116px 0 100px; }
.search-panel { width: 848px; flex: none; border: 4px solid #3977b4; background: #a2c5e9; padding: 20px; }
.search-row { display: flex; height: 78px; margin: 0; color: #0a0a0a; }
.city { width: 401px; background: #fefefe; border: 2px solid #cacaca; box-shadow: inset 0 2px 4px rgba(10, 10, 10, .12); padding-left: 16px; line-height: 74px; }
.state { width: 248px; background: #fefefe; border: solid #cacaca; border-width: 2px 0; display: flex; align-items: center; justify-content: space-between; padding: 0 19px 0 17px; line-height: 74px; }
.caret { border: solid transparent; border-width: 12px 8px 0; border-top-color: #8a8a8a; }
.go { width: 152px; height: 82px; margin-top: -1px; border: 4px solid #2259c6; border-radius: 8px; outline: 2px solid #fff; background: #2f6599; color: #fefefe; font-size: 28.800px; line-height: 76px; text-align: center; }
.history-label { margin-top: 67px; }
.history-item { margin: 10px 10px 0; padding: 1px 0 0 10px; line-height: 50.200px; background: #3977b4; color: #fefefe; }
.results { width: 1760px; }
.today { height: 580px; border: 4px solid #3977b4; background: #a2c5e9; padding: 22px 20px 20px; letter-spacing: .1px; }
h2 { font-size: 80px; line-height: 112px; letter-spacing: .1px; }
.today-icon { width: 118px; height: 74px; margin: 78px 0 63px 42px; }
.uv { display: inline-block; height: 46px; width: 86px; margin: 2px 0 0 -3px; line-height: 46px; border-radius: 9px; background: #f6cf57; color: #fff; text-align: center; vertical-align: top; letter-spacing: 0; }
h3 { height: 184px; padding-top: 42px; font-size: 62px; line-height: 87px; letter-spacing: .05px; color: #3977b4; }
.forecast { display: flex; gap: 40px; height: 500px; }
.day { width: 320px; padding: 22px 20px 20px; background: #3977b4; color: #fefefe; letter-spacing: .1px; }
.day h4 { font-size: 50px; line-height: 70px; letter-spacing: .6px; }
.day svg { width: 106px; height: 102px; margin: 64px 0 48px 48px; }

/* Dock */
.rocks { position: absolute; right: 0; bottom: 0; width: 240px; height: 120px; z-index: -1; }
.dock {
  width: 2883px;
  height: 106px;
  flex: none;
  margin: 2px 0 0 71px;
  display: flex;
  padding: 0 2px 0 3px;
  position: relative;
  border: 2px solid #44464a;
  border-radius: 36px;
  background: linear-gradient(90deg, #1e2026, #191b21 30%, #1b1c21 70%, #2a2525 90%, #2b2524);
  box-shadow: 0 0 90px rgba(0, 0, 0, .28);
}
.app {
  width: 87.300px;
  height: 96px;
  flex: none;
  display: flex;
  justify-content: center;
  align-items: center;
  position: relative;
}
.app svg { width: 68px; height: 68px; }
.app .w70 { width: 70px; height: 70px; }
.app .w74 { width: 74px; height: 74px; }
.app .w76 { width: 76px; height: 76px; }
.app .w84 { width: 84px; height: 84px; }
.app .wf { width: 70px; height: 73px; margin-bottom: 5px; }
.app .w78 { width: 78px; height: 58px; margin-top: 18px; }
.app .wt { width: 60px; height: 78px; }
.app .tv-apple { width: 20px; height: 25px; color: #f2f2f2; }
.running::after {
  content: "";
  position: absolute;
  left: 50%;
  bottom: -4px;
  width: 8px;
  height: 8px;
  margin-left: -4px;
  border-radius: 50%;
  background: #a0a1a5;
}
.divider { width: 2px; height: 78px; margin: 12px 18px 0 19px; flex: none; background: #55565b; }
.cal-month { font: 500 15px Inter, sans-serif; fill: #fff; }
.cal-day { font: 300 43px Inter, sans-serif; fill: #222; }
.office { font: 700 21px "Open Sans", sans-serif; fill: #fff; }
.tv { font: 500 31px Inter, sans-serif; fill: #f2f2f2; }
```
